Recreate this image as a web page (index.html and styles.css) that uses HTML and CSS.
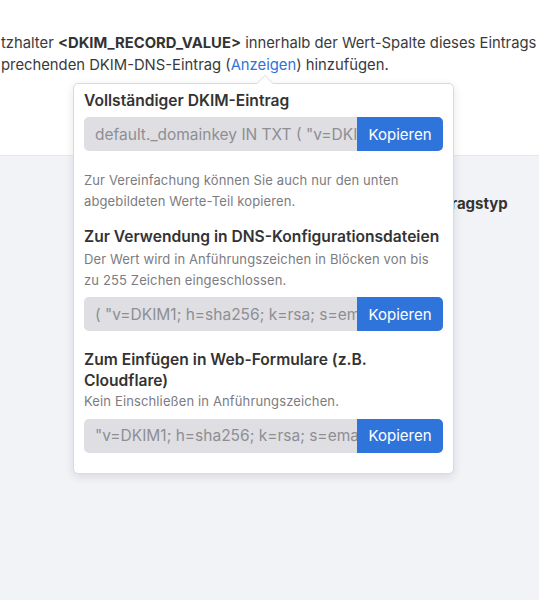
FILE: index.html
```html
<!DOCTYPE html>
<html lang="de">
<head>
<meta charset="utf-8">
<title>DKIM</title>
<link rel="stylesheet" href="styles.css">
</head>
<body>
<div class="top">
  <p class="intro">
    <span class="line">tzhalter <b>&lt;DKIM_RECORD_VALUE&gt;</b> innerhalb der Wert-Spalte dieses Eintrags durch</span>
    <span class="line">prechenden DKIM-DNS-Eintrag (<a class="link" href="#">Anzeigen</a>) hinzufügen.</span>
  </p>
</div>
<div class="lower">
  <div class="col-head">Eintragstyp</div>
</div>

<div class="popover">
  <span class="arrow"></span>
  <section class="sec">
    <h3 class="title">Vollständiger DKIM-Eintrag</h3>
    <div class="field">
      <input class="value" type="text" readonly value='default._domainkey IN TXT ( "v=DKIM1; h=sha256; k=rsa; s=email; p=MIIBIjANBgkqhkiG9w0BAQEFAAOCAQ8AMIIBCgKCAQEA"'>
      <button class="copy" type="button">Kopieren</button>
    </div>
    <p class="note">Zur Vereinfachung können Sie auch nur den unten abgebildeten Werte-Teil kopieren.</p>
  </section>
  <section class="sec sec2">
    <h3 class="title">Zur Verwendung in DNS-Konfigurationsdateien</h3>
    <p class="desc">Der Wert wird in Anführungszeichen in Blöcken von bis zu 255 Zeichen eingeschlossen.</p>
    <div class="field">
      <input class="value" type="text" readonly value='( "v=DKIM1; h=sha256; k=rsa; s=email; p=MIIBIjANBgkqhkiG9w0BAQEFAAOCAQ8AMIIBCgKCAQEA"'>
      <button class="copy" type="button">Kopieren</button>
    </div>
  </section>
  <section class="sec sec3">
    <h3 class="title">Zum Einfügen in Web-Formulare (z.B. Cloudflare)</h3>
    <p class="desc">Kein Einschließen in Anführungszeichen.</p>
    <div class="field">
      <input class="value" type="text" readonly value='"v=DKIM1; h=sha256; k=rsa; s=email; p=MIIBIjANBgkqhkiG9w0BAQEFAAOCAQ8AMIIBCgKCAQEA"'>
      <button class="copy" type="button">Kopieren</button>
    </div>
  </section>
</div>
</body>
</html>
```
FILE: styles.css
```css
html, body {
  margin: 0;
  padding: 0;
}
body {
  background: #f2f3f7;
  font-family: Inter, "Noto Sans", "Liberation Sans", sans-serif;
  color: #3a3a3c;
  overflow: hidden;
  width: 539px;
  height: 600px;
  position: relative;
}
.top {
  background: #ffffff;
  height: 156px;
  box-sizing: border-box;
  border-bottom: 1px solid #e6e6eb;
  padding-top: 33px;
  overflow: hidden;
}
.intro {
  margin: 0;
  font-size: 14.8px;
  line-height: 21.5px;
  white-space: nowrap;
}
.intro .line {
  display: block;
  padding-left: 1px;
}
.intro b {
  font-weight: 700;
  color: #333;
}
.link {
  color: #2f74db;
  text-decoration: none;
}
.lower {
  padding-top: 37px;
  padding-left: 423px;
}
.col-head {
  font-size: 15px;
  font-weight: 700;
  line-height: 21px;
  color: #333;
  white-space: nowrap;
}
.popover {
  position: absolute;
  left: 73px;
  top: 83px;
  width: 381px;
  box-sizing: border-box;
  background: #fff;
  border: 1px solid #d9d9de;
  border-radius: 5px;
  box-shadow: 0 3px 10px rgba(40, 40, 60, 0.12);
  padding: 6px 10px 20px;
}
.arrow {
  position: absolute;
  left: 182px;
  top: -9px;
  width: 0;
  height: 0;
  border-left: 9px solid transparent;
  border-right: 9px solid transparent;
  border-bottom: 9px solid #d9d9de;
}
.arrow::after {
  content: "";
  position: absolute;
  left: -8px;
  top: 1px;
  border-left: 8px solid transparent;
  border-right: 8px solid transparent;
  border-bottom: 8px solid #fff;
}
.sec {
  display: flex;
  flex-direction: column;
}
.title {
  margin: 0;
  font-size: 15.6px;
  font-weight: 600;
  line-height: 21px;
  color: #333;
}
.title + .field {
  margin-top: 6px;
}
.field {
  display: flex;
  height: 34px;
  margin-top: 6.5px;
}
.value {
  flex: 1;
  min-width: 0;
  height: 34px;
  box-sizing: border-box;
  margin: 0;
  border: none;
  outline: none;
  background: #dedee3;
  border-radius: 5px 0 0 5px;
  padding: 0 0 0 11px;
  font-family: inherit;
  font-size: 15.5px;
  color: #8e8e93;
}
.copy {
  width: 86px;
  flex: none;
  border: none;
  margin: 0;
  background: #2f74db;
  color: #fff;
  font-family: inherit;
  font-size: 15px;
  border-radius: 0 5px 5px 0;
  padding: 0;
}
.note {
  margin: 19px 0 0;
  font-size: 13px;
  letter-spacing: 0.13px;
  line-height: 20.5px;
  color: #7c7c80;
}
.desc {
  margin: 1.5px 0 0;
  font-size: 13px;
  letter-spacing: 0.13px;
  line-height: 21px;
  color: #7c7c80;
}
.sec2 {
  margin-top: 15px;
}
.sec3 {
  margin-top: 18px;
}
.sec3 .desc {
  margin-top: 0;
}
```
